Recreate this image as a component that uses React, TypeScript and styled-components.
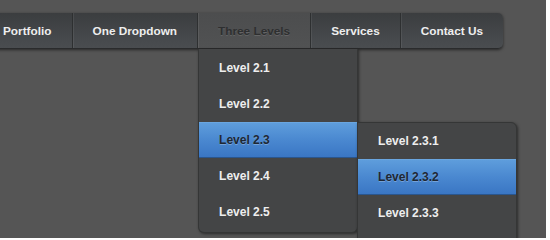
import React from 'react';
import styled, { createGlobalStyle, css } from 'styled-components';

const GlobalStyle = createGlobalStyle`
  html, body {
    margin: 0;
    padding: 0;
    background: #ffffff;
  }
  body {
    font-family: "Liberation Sans", Arial, sans-serif;
  }
  ul {
    list-style: none;
    margin: 0;
    padding: 0;
  }
`;

const Stage = styled.div`
  width: 546px;
  height: 238px;
  background: #555555;
  overflow: hidden;
  padding-top: 13px;
  box-sizing: border-box;
`;

const NavBar = styled.ul`
  display: flex;
  width: fit-content;
  margin-left: -17px;
  height: 35px;
  background: linear-gradient(to bottom, #3b3d3f 0%, #44474a 60%, #4a4d50 100%);
  border-bottom: 1px solid #2a2b2c;
  border-radius: 0 5px 5px 0;
  box-shadow: 0 1px 3px rgba(0, 0, 0, 0.55);
`;

const NavItem = styled.li<{ $active?: boolean; $last?: boolean }>`
  position: relative;
  padding: 0 20px;
  line-height: 36px;
  font-size: 11.8px;
  font-weight: bold;
  color: #eeeeee;
  white-space: nowrap;
  border-right: 1px solid #2e3031;
  box-shadow: inset 1px 0 0 rgba(255, 255, 255, 0.07);
  ${(p) =>
    p.$last &&
    css`
      border-right: none;
      border-radius: 0 5px 5px 0;
    `}
  ${(p) =>
    p.$active &&
    css`
      background: linear-gradient(to bottom, #4c4d4e 0%, #515253 100%);
      color: #2e2f30;
      text-shadow: 0 1px 0 rgba(255, 255, 255, 0.12);
    `}
`;

const Dropdown = styled.ul`
  position: absolute;
  top: 100%;
  left: 0;
  margin-top: 1px;
  width: 158px;
  padding: 1px 0 2px;
  background: #444546;
  border: 1px solid #353636;
  border-top: none;
  border-radius: 0 0 6px 6px;
  box-shadow: 1px 1px 3px rgba(0, 0, 0, 0.5);
  line-height: normal;
  z-index: 2;
`;

const SubMenu = styled(Dropdown)`
  top: -1px;
  left: 100%;
  margin-top: 0;
  padding: 0 0 40px;
  border-top: 1px solid #353636;
  border-radius: 0 6px 6px 0;
`;

const MenuItem = styled.li<{ $active?: boolean }>`
  position: relative;
  height: 36px;
  line-height: 37px;
  padding-left: 20px;
  font-size: 12px;
  font-weight: bold;
  color: #eeeeee;
  box-sizing: border-box;
  text-shadow: none;
  ${(p) =>
    p.$active &&
    css`
      background: linear-gradient(to bottom, #5e9ddc 0%, #4a88d0 50%, #3a76c4 100%);
      border-top: 1px solid #6aa6e0;
      border-bottom: 1px solid #2a568e;
      line-height: 35px;
      color: #1e2733;
      text-shadow: 0 1px 0 rgba(255, 255, 255, 0.25);
    `}
`;

const topItems = ['Portfolio', 'One Dropdown', 'Three Levels', 'Services', 'Contact Us'];

export default function App() {
  return (
    <>
      <GlobalStyle />
      <Stage>
        <NavBar>
          {topItems.map((label, i) => (
            <NavItem
              key={label}
              $active={label === 'Three Levels'}
              $last={i === topItems.length - 1}
            >
              {label}
              {label === 'Three Levels' && (
                <Dropdown>
                  <MenuItem>Level 2.1</MenuItem>
                  <MenuItem>Level 2.2</MenuItem>
                  <MenuItem $active>
                    Level 2.3
                    <SubMenu>
                      <MenuItem>Level 2.3.1</MenuItem>
                      <MenuItem $active>Level 2.3.2</MenuItem>
                      <MenuItem>Level 2.3.3</MenuItem>
                    </SubMenu>
                  </MenuItem>
                  <MenuItem>Level 2.4</MenuItem>
                  <MenuItem>Level 2.5</MenuItem>
                </Dropdown>
              )}
            </NavItem>
          ))}
        </NavBar>
      </Stage>
    </>
  );
}
